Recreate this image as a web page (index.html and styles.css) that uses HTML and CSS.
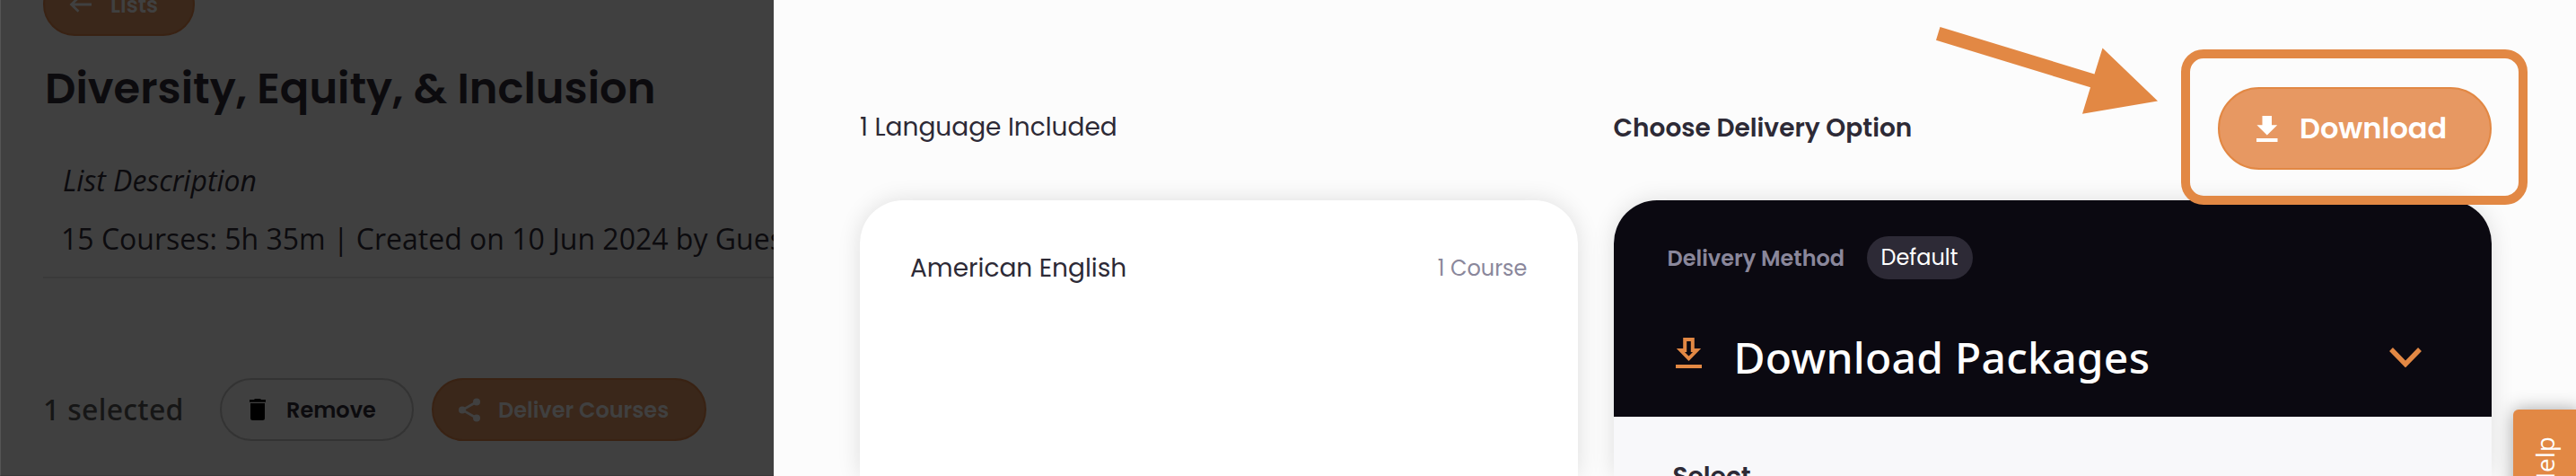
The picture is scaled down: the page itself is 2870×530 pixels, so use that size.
FILE: index.html
```
<!DOCTYPE html>
<html lang="en">
<head>
<meta charset="utf-8">
<title>Download Packages</title>
<link rel="stylesheet" href="styles.css">
</head>
<body>
<main class="app">
  <aside class="list-page">
    <button class="btn btn-dim back">
      <svg class="back-icon" viewBox="0 0 26 18"><path d="M10.500 1.300 2.500 9l8 7.700M2.500 9H25" /></svg>
      <span>Lists</span>
    </button>
    <h1 class="title">Diversity, Equity, &amp; Inclusion</h1>
    <p class="description">List Description</p>
    <p class="meta">15 Courses: 5h 35m | Created on 10 Jun 2024 by Guest</p>
    <hr class="divider">
    <div class="actions">
      <span class="selected">1 selected</span>
      <button class="btn remove">
        <svg class="trash-icon" viewBox="0 0 18 24"><path d="M1 5h16v16.500a2.500 2.500 0 0 1-2.500 2.500h-11A2.500 2.500 0 0 1 1 21.500zM0 1h5l1-1h6l1 1h5v2.800H0z"/></svg>
        <span>Remove</span>
      </button>
      <button class="btn btn-dim deliver">
        <svg class="share-icon" viewBox="0 0 24 27"><path d="M20 4.500 4 13.500l16 9" /><circle cx="20" cy="4.500" r="4"/><circle cx="4" cy="13.500" r="4"/><circle cx="20" cy="22.500" r="4"/></svg>
        <span>Deliver Courses</span>
      </button>
    </div>
  </aside>

  <section class="drawer">
    <div class="column">
      <header class="column-head"><span class="heading-light">1 Language Included</span></header>
      <div class="card languages">
        <div class="language">
          <span class="language-name">American English</span>
          <span class="language-count">1 Course</span>
        </div>
      </div>
    </div>
    <div class="column">
      <header class="column-head">
        <h2 class="heading">Choose Delivery Option</h2>
        <button class="download">
          <svg class="download-icon" viewBox="0 0 24 29"><path d="M6.500 0h10.500v10.200h6.200L11.800 21.500.400 10.200h6.100zM0 25h23.500v4H0z"/></svg>
          <span>Download</span>
          <i class="highlight"></i>
        </button>
      </header>
      <div class="card delivery">
        <div class="method">
          <div class="method-row">
            <span class="method-label">Delivery Method</span>
            <span class="pill">Default</span>
          </div>
          <div class="method-select">
            <svg class="package-icon" viewBox="0 0 29 34"><path fill-rule="evenodd" d="M8.200 0h12.600v12h7.400L14.500 26 .800 12h7.400zM12.200 4v12h-2.200l4.500 4.400L19 16h-2.200V4zM0 30h29v4H0z"/></svg>
            <span class="method-name">Download Packages</span>
            <svg class="chevron" viewBox="0 0 36 22"><path d="M2 2l16 16.500L34 2"/></svg>
          </div>
        </div>
        <div class="select">Select</div>
      </div>
    </div>
  </section>
</main>
<svg class="pointer" viewBox="0 0 248 98"><path d="M4.500 0 176.500 52.500 185.500 23.500 247 82.500 163 96.700 172 67.300 0 14.700z"/></svg>
<div class="help">Help</div>
</body>
</html>
```
FILE: styles.css
```
* { box-sizing: border-box; }

html { overflow: hidden; }

body {
  margin: 0;
  width: 2870px;
  height: 530px;
  overflow: hidden;
  position: relative;
  background: #fcfcfc;
  font-family: Poppins, Inter, sans-serif;
  color: #2d2a36;
}

h1, h2, p { margin: 0; }

button {
  font: inherit;
  margin: 0;
}

.app { display: flex; height: 530px; overflow: hidden; }

/* Dimmed list page behind the drawer */
.list-page {
  width: 861.5px;
  height: 530px;
  flex: none;
  overflow: hidden;
  white-space: nowrap;
  background: #404040;
  border-left: 1px solid #555;
  border-bottom: 1px solid #383838;
  padding-left: 47px;
  color: #0c0b0e;
}

.btn {
  display: flex;
  align-items: center;
  height: 70px;
  border-radius: 35px;
  border: 2px solid #333;
  background: none;
  color: #0c0b0e;
  font-size: 24px;
  font-weight: 600;
  padding: 0;
}

.btn-dim {
  background: #3a271a;
  border-color: #392213;
  color: #404040;
}

.back {
  width: 169px;
  margin-top: -30px;
  padding-left: 27px;
  gap: 20px;
}

.back-icon {
  width: 26px;
  height: 18px;
  fill: none;
  stroke: #404040;
  stroke-width: 2.8;
}

.title {
  margin: 29px 0 0 2px;
  line-height: 60px;
  font-size: 48px;
  font-weight: 600;
}

.description, .meta {
  font-family: "Open Sans", "Noto Sans", sans-serif;
  font-size: 32px;
  line-height: 40px;
}

.description {
  margin: 52px 0 0 22px;
  font-style: italic;
}

.meta { margin: 25px 0 0 20px; }

.divider {
  height: 2px;
  margin: 22px 0 0;
  border: 0;
  background: #3a3a3a;
}

.actions {
  display: flex;
  align-items: center;
  margin-top: 111px;
}

.selected {
  width: 197px;
  font-family: "Noto Sans", "Open Sans", sans-serif;
  line-height: 40px;
  font-size: 32px;
  font-weight: 500;
  letter-spacing: .3px;
  color: #161616;
}

.remove {
  width: 216px;
  padding-left: 31px;
  gap: 23px;
}

.trash-icon { width: 18px; height: 24px; }

.deliver {
  width: 306px;
  margin-left: 20px;
  padding-left: 28px;
  gap: 20px;
}

.share-icon {
  width: 24px;
  height: 27px;
  fill: #404040;
}

.share-icon path { fill: none; stroke: #404040; stroke-width: 2.6; }

/* Drawer */
.drawer {
  display: grid;
  grid-template-columns: 799.5px 978.5px;
  column-gap: 40px;
  height: 530px;
  padding: 97px 0 0 96.5px;
}

.column-head {
  display: flex;
  align-items: center;
  justify-content: space-between;
  height: 92px;
  margin-bottom: 34px;
}

.heading-light {
  line-height: 40px;
  padding-bottom: 3px;
  font-size: 28px;
}

.heading {
  line-height: 40px;
  padding-bottom: 1px;
  font-size: 28px;
  font-weight: 600;
}

.card {
  height: 307px;
  overflow: hidden;
  border-radius: 48px 48px 0 0;
  background: #fff;
  box-shadow: 0 0 26px rgba(0, 0, 0, .12);
}

.language {
  display: flex;
  align-items: center;
  justify-content: space-between;
  padding: 56px 56px 0 56px;
}

.language-name {
  line-height: 40px;
  font-size: 28px;
}

.language-count {
  line-height: 40px;
  font-size: 24px;
  color: #8a879b;
}

.download {
  position: relative;
  display: flex;
  align-items: center;
  width: 305px;
  height: 92px;
  padding: 0 0 0 41px;
  gap: 24px;
  border: 2px solid #e28844;
  border-radius: 46px;
  background: #e79862;
  color: #fff;
  font-size: 32px;
  font-weight: 600;
}

.download-icon {
  width: 24px;
  height: 29px;
  margin-top: 1px;
  fill: #fff;
}

.highlight {
  position: absolute;
  inset: -44px -42px -41px -43.500px;
  border: 10px solid #e28844;
  border-radius: 25px;
}

.delivery { background: #f8f8fa; }

.method {
  height: 241px;
  padding: 40px 78px 0 60px;
  background: #0b0911;
}

.method-row { display: flex; align-items: center; }

.method-label {
  width: 222px;
  font-size: 24px;
  font-weight: 600;
  color: #8a879b;
}

.pill {
  width: 118px;
  height: 48px;
  line-height: 48px;
  border-radius: 24px;
  text-align: center;
  font-size: 24px;
  color: #fff;
  background: #2d2a36;
}

.method-select {
  display: flex;
  align-items: center;
  height: 60px;
  margin: 57px 0 0 9px;
}

.package-icon {
  width: 29px;
  height: 34px;
  margin-bottom: 10px;
  fill: #e28844;
}

.method-name {
  margin: 0 auto 0 36px;
  font-family: "Noto Sans", "Open Sans", sans-serif;
  font-size: 48px;
  font-weight: 500;
  line-height: 60px;
  letter-spacing: .25px;
  color: #fff;
}

.chevron {
  width: 36px;
  height: 22px;
  fill: none;
  stroke: #e28844;
  stroke-width: 5.4;
}

.select {
  padding: 47px 0 0 66px;
  line-height: 40px;
  font-size: 28px;
  font-weight: 600;
}

/* Overlays */
.pointer {
  position: absolute;
  left: 2156.5px;
  top: 30px;
  width: 248px;
  height: 98px;
  fill: #e28844;
}

.help {
  position: absolute;
  left: 2800px;
  top: 456px;
  width: 76px;
  height: 140px;
  padding: 30px 6px 0 0;
  border-radius: 6px;
  background: #e28844;
  box-shadow: 0 0 20px rgba(0, 0, 0, .35);
  color: #fff;
  font-family: "Open Sans", "Noto Sans", sans-serif;
  font-size: 28px;
  line-height: 70px;
  writing-mode: sideways-lr;
  text-align: right;
}
```
